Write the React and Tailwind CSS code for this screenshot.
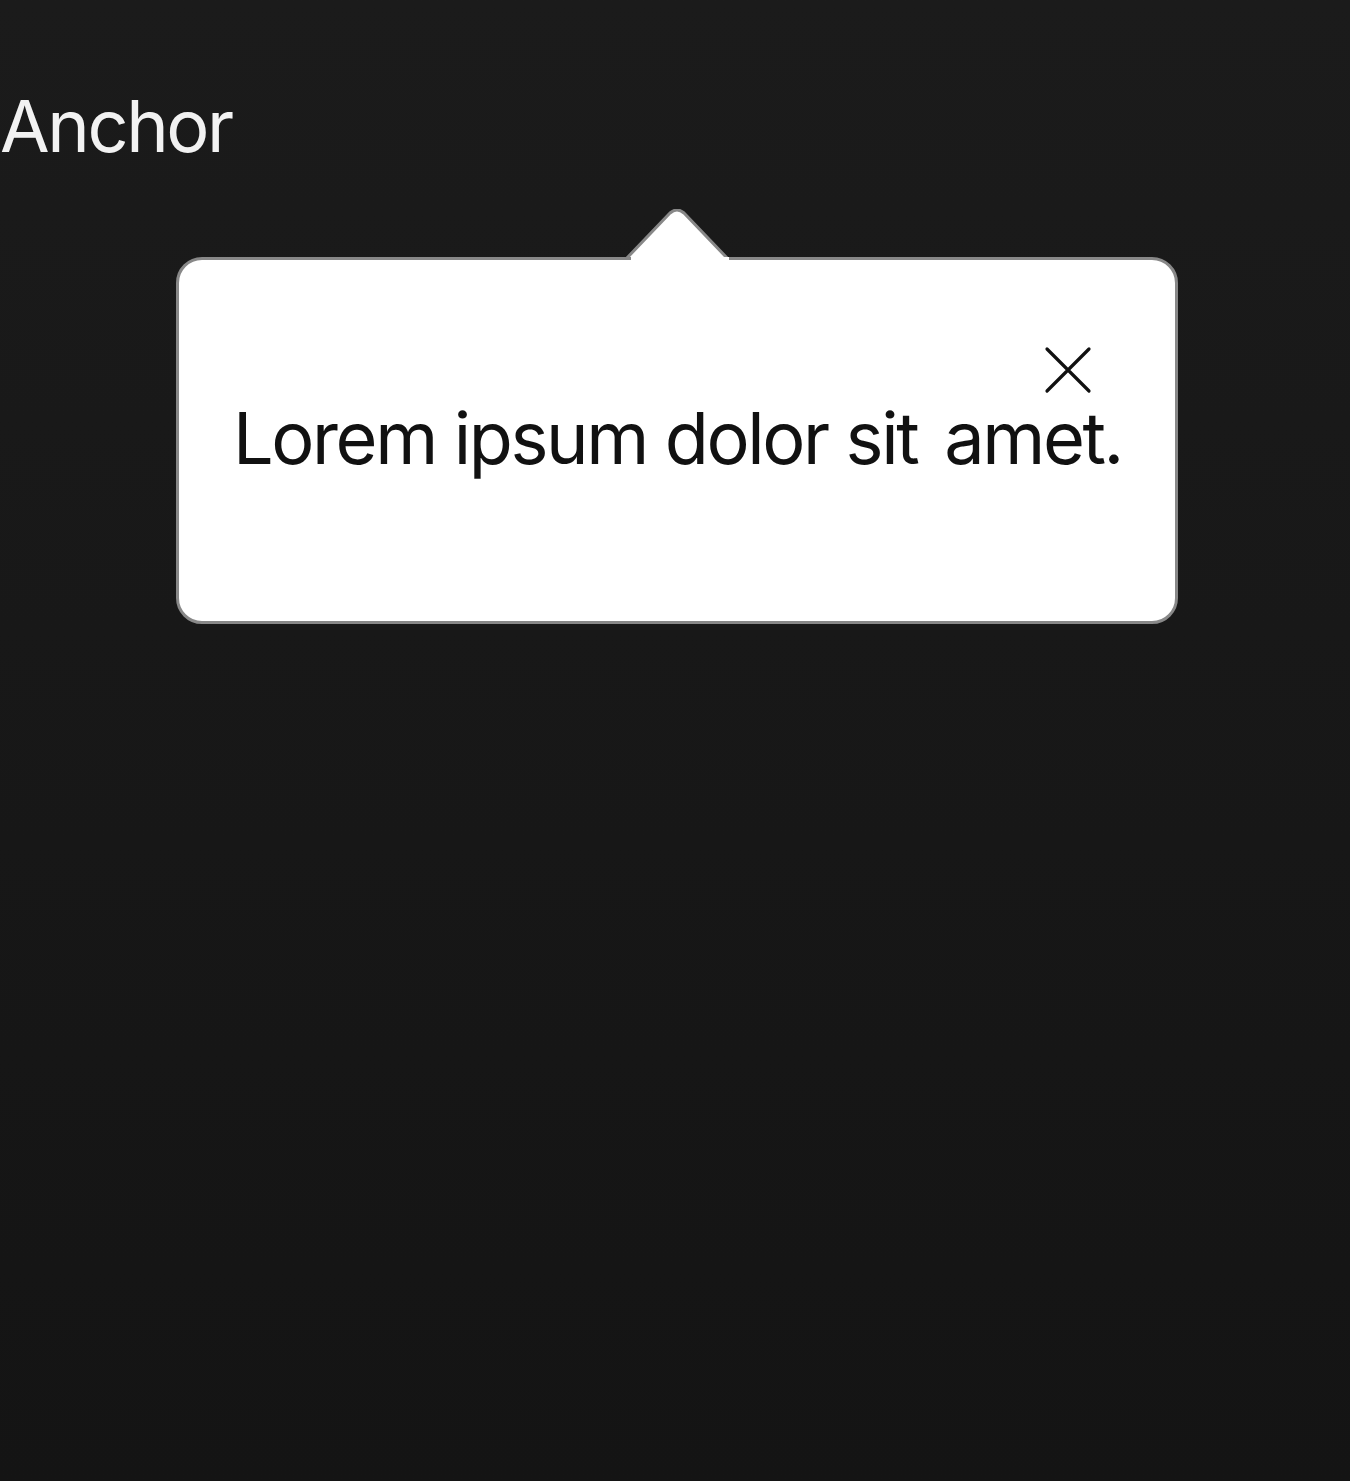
import React from "react";

function CloseIcon() {
	return (
		<svg width="48" height="48" viewBox="0 0 48 48" fill="none" stroke="#111" strokeWidth="3.2" strokeLinecap="round">
			<path d="M3 3 L45 45 M45 3 L3 45" />
		</svg>
	);
}

export default function App() {
	return (
		<div
			className="min-h-[1481px] bg-gradient-to-b from-[#1b1b1b] to-[#141414]"
			style={{ fontFamily: "Inter, 'Noto Sans', sans-serif" }}
		>
			<div className="pt-[82px] text-[72px] leading-[88px] text-[#f2f2f2] tracking-[-2.4px]">
				Anchor
			</div>

			{/* tooltip */}
			<div className="relative mt-[87px] ml-[176px] w-[1002px]">
				<svg
					className="absolute left-[446px] top-[-48px]"
					width="110"
					height="52"
					viewBox="0 0 110 52"
				>
					<path
						d="M4 50 L48 4 Q55 -2 62 4 L106 50 Z"
						fill="#fff"
						stroke="#888"
						strokeWidth="3"
						strokeLinejoin="round"
					/>
				</svg>
				<div className="relative h-[367px] rounded-[26px] border-[3px] border-[#888] bg-white">
					{/* cover the border under the arrow */}
					<div className="absolute left-[452px] top-[-3px] h-[4px] w-[98px] bg-white" />
					<div className="flex flex-col px-[54px] pt-[86px]">
						<div className="flex justify-end pr-[29px]">
							<button className="flex items-center justify-center">
								<CloseIcon />
							</button>
						</div>
						<p className="mt-[4px] whitespace-nowrap text-[72px] leading-[80px] text-[#111] tracking-[-2.4px]">
							Lorem ipsum dolor sit <span className="inline-block w-[9px]" />amet.
						</p>
					</div>
				</div>
			</div>
		</div>
	);
}
